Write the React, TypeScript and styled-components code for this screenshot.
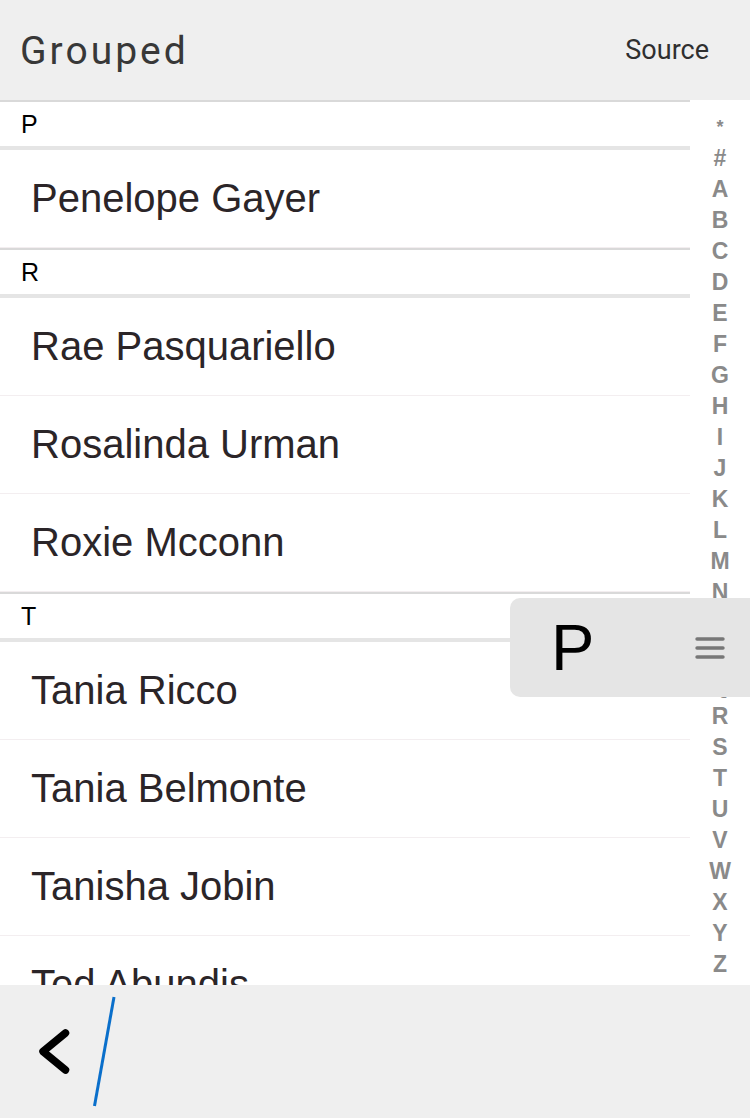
import React from "react";
import styled, { createGlobalStyle } from "styled-components";

const Global = createGlobalStyle`
  html, body { margin: 0; padding: 0; background: #ffffff; }
  body { font-family: "Liberation Sans", Arial, sans-serif; }
  * { box-sizing: border-box; }
`;

const Screen = styled.div`
  width: 750px;
  height: 1118px;
  display: flex;
  flex-direction: column;
  overflow: hidden;
  position: relative;
  background: #ffffff;
`;

const Header = styled.header`
  height: 100px;
  flex: none;
  background: #efefef;
  display: flex;
  align-items: center;
  justify-content: space-between;
  padding: 0 41px 0 20px;
`;

const Title = styled.h1`
  margin: 0;
  font-family: Roboto, "Liberation Sans", sans-serif;
  font-weight: 400;
  font-size: 39px;
  letter-spacing: 3px;
  color: #383838;
  transform: translateY(1px);
`;

const SourceLink = styled.span`
  font-family: Roboto, "Liberation Sans", sans-serif;
  font-size: 27px;
  color: #2f2f2f;
`;

const Body = styled.div`
  flex: 1;
  display: flex;
  min-height: 0;
  overflow: hidden;
`;

const List = styled.div`
  width: 690px;
  flex: none;
  overflow: hidden;
`;

const SectionHeader = styled.div`
  height: 50px;
  border-top: 2px solid #d9d9d9;
  border-bottom: 4px solid #e5e5e5;
  display: flex;
  align-items: center;
  padding-left: 21px;
  font-size: 25px;
  color: #000000;
`;

const Row = styled.div`
  height: 98px;
  border-bottom: 1px solid #f3eef0;
  display: flex;
  align-items: center;
  padding-left: 31px;
  font-size: 40px;
  color: #2b2528;
`;

const IndexColumn = styled.div`
  width: 60px;
  flex: none;
  padding-top: 12px;
  display: flex;
  flex-direction: column;
  align-items: center;
`;

const IndexLetter = styled.div<{ $small?: boolean }>`
  height: 31px;
  line-height: 31px;
  font-family: "Liberation Sans", Arial, sans-serif;
  font-size: ${(p) => (p.$small ? "18px" : "23px")};
  font-weight: 700;
  color: #8a8a8a;
`;

const Popup = styled.div`
  position: absolute;
  left: 510px;
  top: 598px;
  width: 260px;
  height: 99px;
  background: #e5e5e5;
  border-radius: 10px;
  display: flex;
  align-items: center;
  padding-left: 41px;
`;

const PopupLetter = styled.span`
  font-size: 65px;
  color: #000000;
  width: 144px;
`;

const Footer = styled.footer`
  height: 133px;
  flex: none;
  background: #efefef;
`;

const FooterArt = styled.svg`
  display: block;
`;

const groups: { letter: string; names: string[] }[] = [
  { letter: "P", names: ["Penelope Gayer"] },
  { letter: "R", names: ["Rae Pasquariello", "Rosalinda Urman", "Roxie Mcconn"] },
  { letter: "T", names: ["Tania Ricco", "Tania Belmonte", "Tanisha Jobin", "Ted Abundis"] },
];

const indexLetters = ["*", "#", ..."ABCDEFGHIJKLMNOPQRSTUVWXYZ".split("")];

export default function App() {
  return (
    <>
      <Global />
      <Screen>
        <Header>
          <Title>Grouped</Title>
          <SourceLink>Source</SourceLink>
        </Header>
        <Body>
          <List>
            {groups.map((g) => (
              <React.Fragment key={g.letter}>
                <SectionHeader>{g.letter}</SectionHeader>
                {g.names.map((n) => (
                  <Row key={n}>{n}</Row>
                ))}
              </React.Fragment>
            ))}
          </List>
          <IndexColumn>
            {indexLetters.map((l) => (
              <IndexLetter key={l} $small={l === "*"}>
                {l}
              </IndexLetter>
            ))}
          </IndexColumn>
        </Body>
        <Popup>
          <PopupLetter>P</PopupLetter>
          <svg width="30" height="26" viewBox="0 0 30 26">
            <g stroke="#777777" strokeWidth="3.4" strokeLinecap="round">
              <line x1="2" y1="4" x2="28" y2="4" />
              <line x1="2" y1="13" x2="28" y2="13" />
              <line x1="2" y1="22" x2="28" y2="22" />
            </g>
          </svg>
        </Popup>
        <Footer>
          <FooterArt width="750" height="133" viewBox="0 0 750 133">
            <polyline
              points="65.5,48 43,66.5 65.5,85"
              fill="none"
              stroke="#000000"
              strokeWidth="7.5"
              strokeLinecap="round"
              strokeLinejoin="round"
            />
            <line x1="114" y1="12" x2="94.5" y2="121" stroke="#0a6fcb" strokeWidth="3" />
          </FooterArt>
        </Footer>
      </Screen>
    </>
  );
}
